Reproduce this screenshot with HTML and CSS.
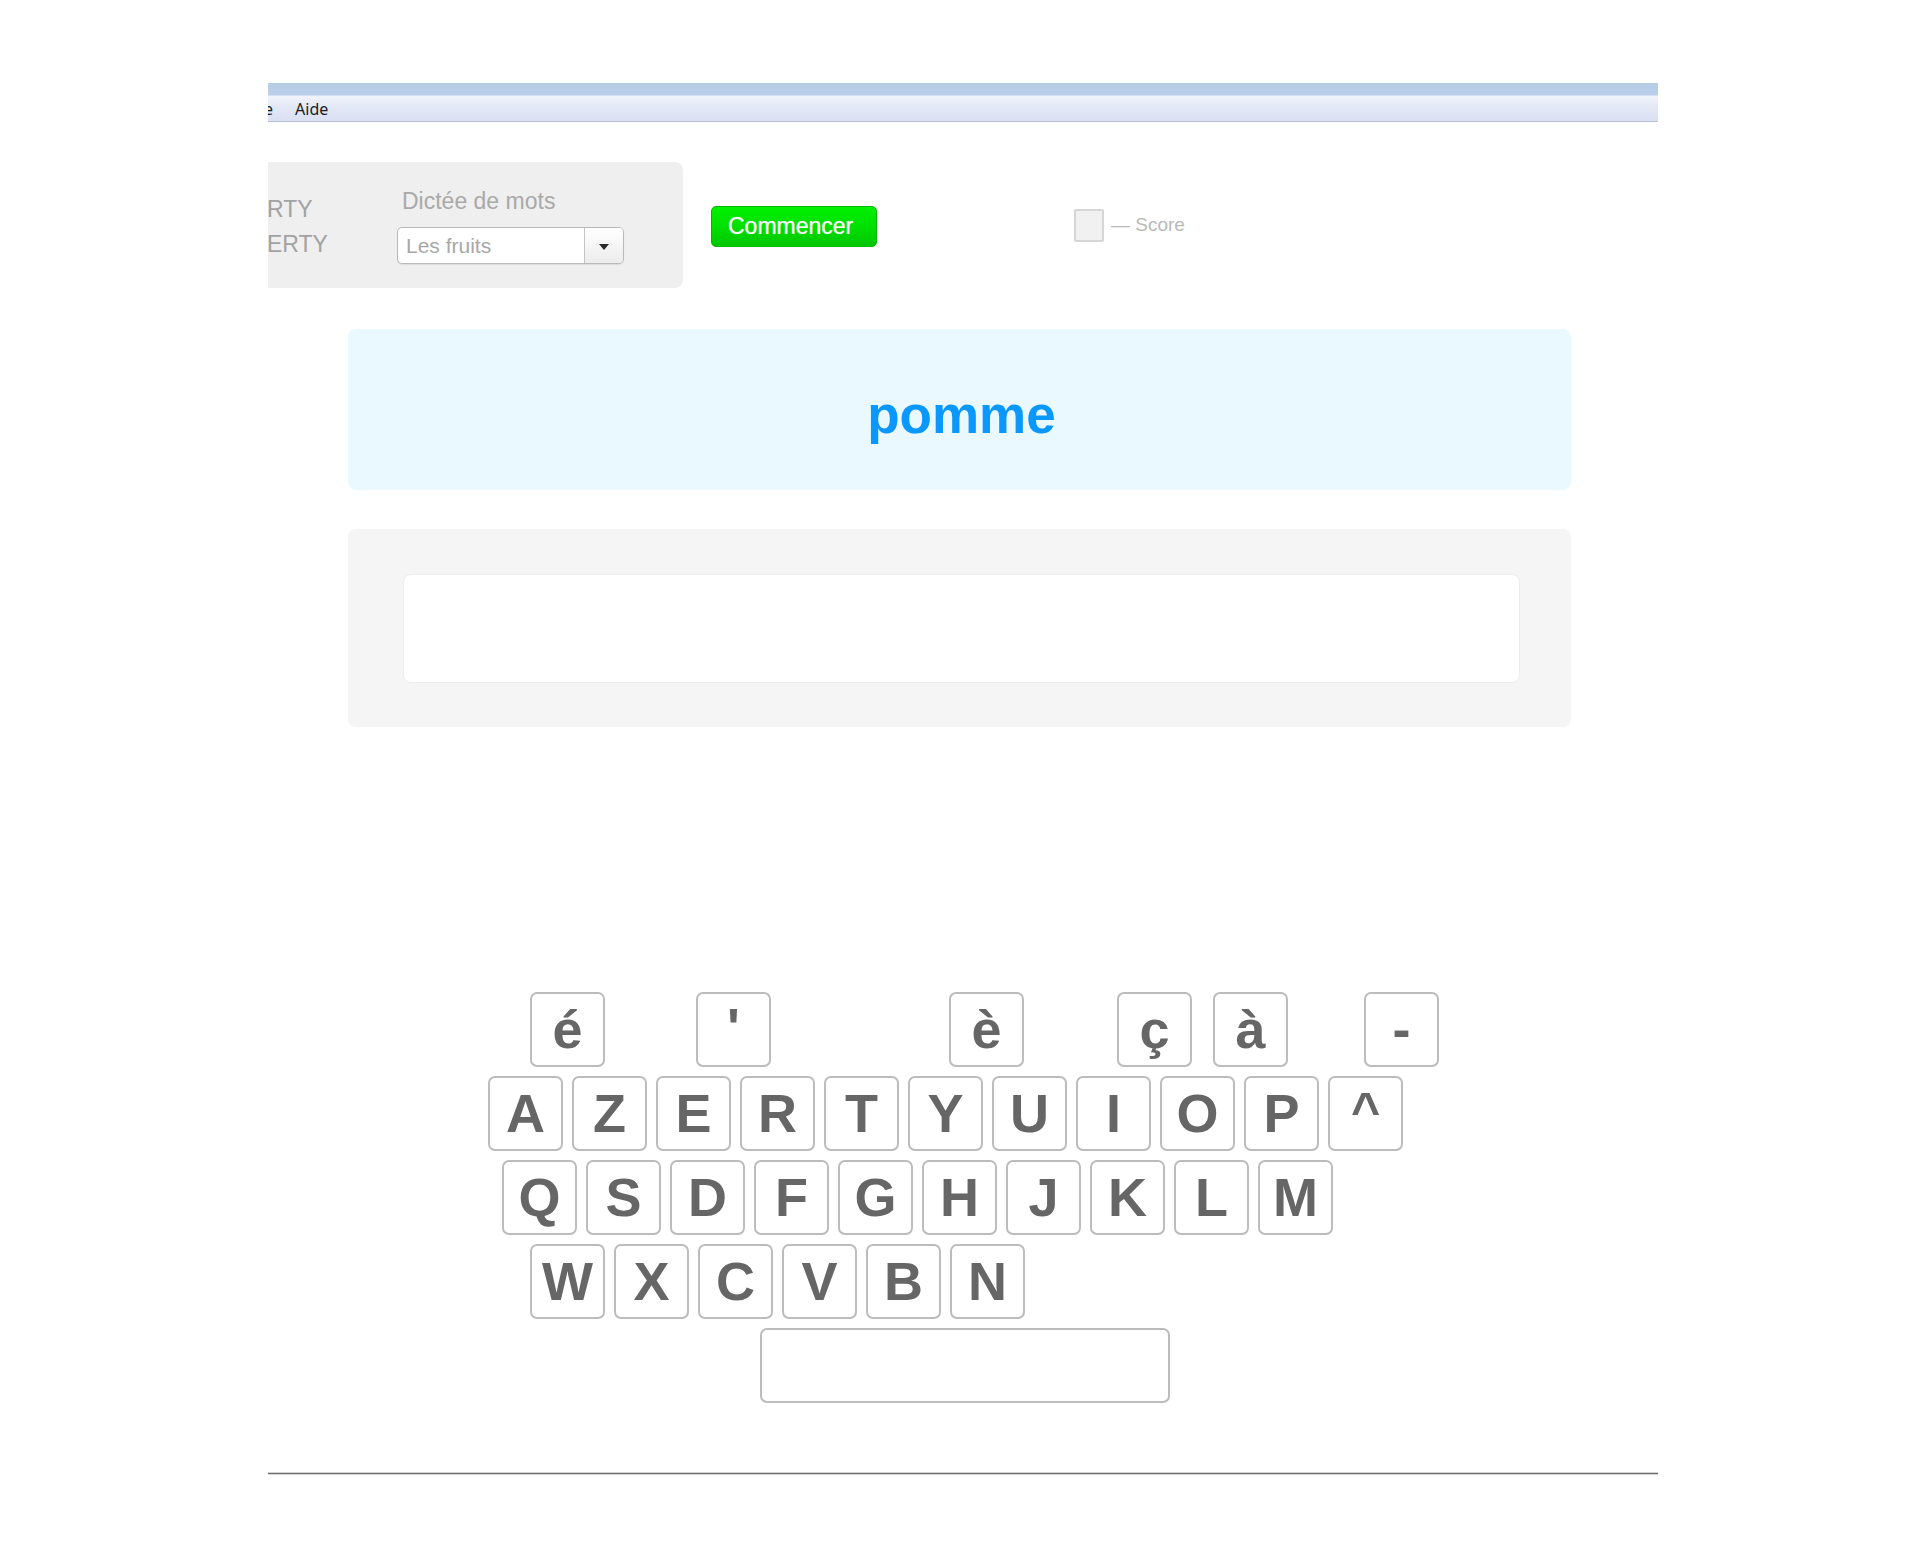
FILE: index.html
```html
<!DOCTYPE html>
<html lang="fr">
<head>
<meta charset="utf-8">
<title>Dictée de mots</title>
<link rel="stylesheet" href="styles.css">
</head>
<body>
<div class="page">
  <div class="menubar">
    <div class="menubar-items">
      <span class="menu-item clipped">e</span>
      <span class="menu-item">Aide</span>
    </div>
  </div>

  <div class="toolbar">
    <div class="panel">
      <div class="layouts">
        <div class="layout-opt">RTY</div>
        <div class="layout-opt">ERTY</div>
      </div>
      <div class="dictee">
        <div class="dictee-label">Dictée de mots</div>
        <div class="select">
          <span class="select-value">Les fruits</span>
          <span class="select-btn"><span class="caret"></span></span>
        </div>
      </div>
    </div>
    <button class="btn-start">Commencer</button>
    <div class="score">
      <span class="score-box"></span>
      <span class="score-label">— Score</span>
    </div>
  </div>

  <div class="word-box">
    <span class="word">pomme</span>
  </div>

  <div class="answer-box">
    <div class="answer-input"></div>
  </div>

  <div class="keyboard">
    <div class="krow row-accents">
      <span class="key k-e-acute">é</span>
      <span class="key k-apos">'</span>
      <span class="key k-e-grave">è</span>
      <span class="key k-cedil">ç</span>
      <span class="key k-a-grave">à</span>
      <span class="key k-dash">-</span>
    </div>
    <div class="krow row-top">
      <span class="key">A</span><span class="key">Z</span><span class="key">E</span><span class="key">R</span><span class="key">T</span><span class="key">Y</span><span class="key">U</span><span class="key">I</span><span class="key">O</span><span class="key">P</span><span class="key k-caret">^</span>
    </div>
    <div class="krow row-home">
      <span class="key">Q</span><span class="key">S</span><span class="key">D</span><span class="key">F</span><span class="key">G</span><span class="key">H</span><span class="key">J</span><span class="key">K</span><span class="key">L</span><span class="key">M</span>
    </div>
    <div class="krow row-bottom">
      <span class="key">W</span><span class="key">X</span><span class="key">C</span><span class="key">V</span><span class="key">B</span><span class="key">N</span>
    </div>
    <div class="krow row-space">
      <span class="key key-space"></span>
    </div>
  </div>

  <div class="footer-line"></div>
</div>
</body>
</html>
```

FILE: styles.css
```css
html, body {
  margin: 0;
  padding: 0;
  background: #ffffff;
}

body {
  font-family: "Liberation Sans", Arial, sans-serif;
}

.page {
  width: 1390px;
  margin-left: 268px;
  padding-top: 83px;
  overflow: hidden;
}

/* ---------- menu bar ---------- */
.menubar {
  height: 38px;
  background: linear-gradient(to bottom, #b6cbe6 0, #bad0ea 12px, #f1f4fb 13px, #e4e9f6 60%, #d9e0f2 100%);
  border-bottom: 1px solid #b7c0d6;
  overflow: hidden;
}

.menubar-items {
  display: flex;
  padding-top: 14px;
  height: 24px;
  align-items: center;
}

.menu-item {
  font-family: "Noto Sans", "DejaVu Sans", sans-serif;
  font-size: 16px;
  color: #1b1b1b;
  line-height: 24px;
}

.menu-item.clipped {
  margin-left: -4px;
  margin-right: 22px;
}

/* ---------- toolbar ---------- */
.toolbar {
  display: flex;
  align-items: center;
  margin-top: 40px;
}

.panel {
  display: flex;
  width: 415px;
  height: 126px;
  background: #efefef;
  border-radius: 0 8px 8px 0;
  overflow: hidden;
}

.layouts {
  width: 135px;
  padding-top: 30px;
  margin-left: -1px;
}

.layout-opt {
  font-size: 23px;
  line-height: 35px;
  color: #a2a2a2;
}

.dictee {
  padding-top: 26px;
  margin-left: -5px;
}

.dictee-label {
  font-size: 23px;
  line-height: 27px;
  color: #a9a9a9;
  padding-left: 5px;
}

.select {
  display: flex;
  margin-top: 12px;
  width: 225px;
  height: 35px;
  border: 1px solid #b9b9b9;
  border-radius: 5px;
  background: #ffffff;
  box-shadow: 0 1px 1px rgba(0,0,0,0.08);
  overflow: hidden;
}

.select-value {
  flex: 1;
  font-size: 21px;
  line-height: 36px;
  color: #a8a8a8;
  padding-left: 8px;
}

.select-btn {
  width: 38px;
  border-left: 1px solid #c4c4c4;
  background: linear-gradient(to bottom, #ffffff, #ececec);
  display: flex;
  align-items: center;
  justify-content: center;
}

.caret {
  width: 0;
  height: 0;
  border-left: 5px solid transparent;
  border-right: 5px solid transparent;
  border-top: 6px solid #2a2a2a;
  margin-top: 2px;
}

.btn-start {
  margin-left: 28px;
  margin-top: 2px;
  width: 166px;
  height: 41px;
  border: 1px solid #00b800;
  border-radius: 5px;
  background: linear-gradient(to bottom, #00f000 0, #00e000 50%, #00c600 100%);
  color: #ffffff;
  font-family: "Liberation Sans", Arial, sans-serif;
  font-size: 23px;
  text-align: left;
  padding: 0 0 0 16px;
  text-shadow: 0 0 1px rgba(255,255,255,0.6);
}

.score {
  display: flex;
  align-items: center;
  margin-left: 197px;
}

.score-box {
  width: 26px;
  height: 29px;
  background: #f1f1f1;
  border: 2px solid #d6d6d6;
  border-radius: 2px;
}

.score-label {
  margin-left: 7px;
  font-size: 19px;
  color: #b9b9b9;
}

/* ---------- word box ---------- */
.word-box {
  margin-top: 41px;
  margin-left: 80px;
  width: 1223px;
  height: 161px;
  background: #eaf9ff;
  border-radius: 8px;
  display: flex;
  justify-content: center;
  align-items: center;
}

.word {
  font-size: 53px;
  font-weight: bold;
  color: #0a98ff;
  line-height: 1;
  margin-top: 10px;
  margin-left: 4px;
}

/* ---------- answer box ---------- */
.answer-box {
  margin-top: 39px;
  margin-left: 80px;
  width: 1223px;
  height: 198px;
  box-sizing: border-box;
  padding: 45px 0 0 55px;
  background: #f5f5f5;
  border-radius: 8px;
}

.answer-input {
  width: 1117px;
  height: 109px;
  box-sizing: border-box;
  background: #ffffff;
  border: 1px solid #ededed;
  border-radius: 8px;
}

/* ---------- keyboard ---------- */
.keyboard {
  margin-top: 265px;
  display: flex;
  flex-direction: column;
  gap: 9px;
}

.krow {
  display: flex;
  gap: 9px;
}

.row-accents { padding-left: 262px; gap: 0; }
.row-top { padding-left: 220px; }
.row-home { padding-left: 234px; }
.row-bottom { padding-left: 262px; }
.row-space { padding-left: 492px; }

.key {
  box-sizing: border-box;
  width: 75px;
  height: 75px;
  border: 2px solid #bcbcbc;
  border-radius: 7px;
  background: #ffffff;
  color: #666666;
  font-family: "Liberation Sans", Arial, sans-serif;
  font-weight: bold;
  font-size: 54px;
  line-height: 71px;
  text-align: center;
}

.k-apos { margin-left: 91px; line-height: 66px; }
.k-e-grave { margin-left: 178px; }
.k-cedil { margin-left: 93px; }
.k-a-grave { margin-left: 21px; }
.k-dash { margin-left: 76px; }

.k-caret { font-size: 50px; line-height: 66px; }

.key-space {
  width: 410px;
}

/* ---------- footer ---------- */
.footer-line {
  margin-top: 69px;
  height: 1px;
  background: #6e6e6e;
  border-top: 1px solid #d4d4d4;
  border-bottom: 1px solid #d4d4d4;
  margin-bottom: 80px;
}
```
